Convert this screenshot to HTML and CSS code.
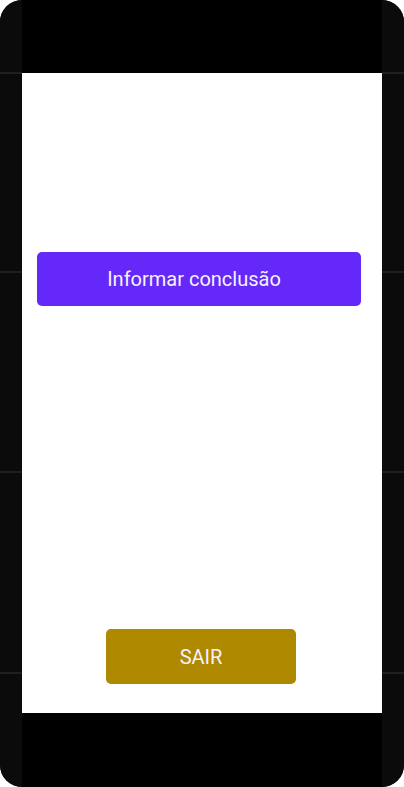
FILE: index.html
```html
<!DOCTYPE html>
<html lang="pt">
<head>
<meta charset="utf-8">
<title>Informar conclusão</title>
<link rel="stylesheet" href="styles.css">
</head>
<body>
<div class="device">
  <div class="side"></div>
  <div class="column">
    <div class="bar bar-top"></div>
    <main class="screen">
      <button class="btn btn-primary">Informar conclusão</button>
      <div class="spacer"></div>
      <button class="btn btn-exit">SAIR</button>
    </main>
    <div class="bar bar-bottom"></div>
  </div>
  <div class="side"></div>
</div>
</body>
</html>
```

FILE: styles.css
```css
html, body {
  margin: 0;
  padding: 0;
  background: #ffffff;
}

.device {
  width: 404px;
  height: 787px;
  border-radius: 22px;
  overflow: hidden;
  display: grid;
  grid-template-columns: 22px 360px 22px;
  background: #0b0b0b;
}

.side {
  background:
    linear-gradient(to bottom,
      transparent 72px, #1f1f1f 72px, #1f1f1f 74px, transparent 74px,
      transparent 271px, #1f1f1f 271px, #1f1f1f 273px, transparent 273px,
      transparent 471px, #1f1f1f 471px, #1f1f1f 473px, transparent 473px,
      transparent 672px, #1f1f1f 672px, #1f1f1f 674px, transparent 674px),
    #0b0b0b;
}

.column {
  display: flex;
  flex-direction: column;
  background: #000000;
}

.bar-top {
  height: 73px;
}

.bar-bottom {
  flex: 1;
}

.screen {
  height: 640px;
  background: #ffffff;
  display: flex;
  flex-direction: column;
  padding: 179px 21px 29px 15px;
  box-sizing: border-box;
}

.spacer {
  flex: 1;
}

.btn {
  border: none;
  border-radius: 5px;
  color: #f7f0ff;
  font-family: Roboto, "Noto Sans", sans-serif;
  font-size: 20px;
  font-weight: 400;
  padding: 0;
  cursor: pointer;
}

.btn-primary {
  height: 54px;
  width: 100%;
  padding-right: 10px;
  background: #6429f8;
}

.btn-exit {
  align-self: flex-start;
  margin-left: 69px;
  width: 190px;
  height: 55px;
  background: #ae8900;
}
```
